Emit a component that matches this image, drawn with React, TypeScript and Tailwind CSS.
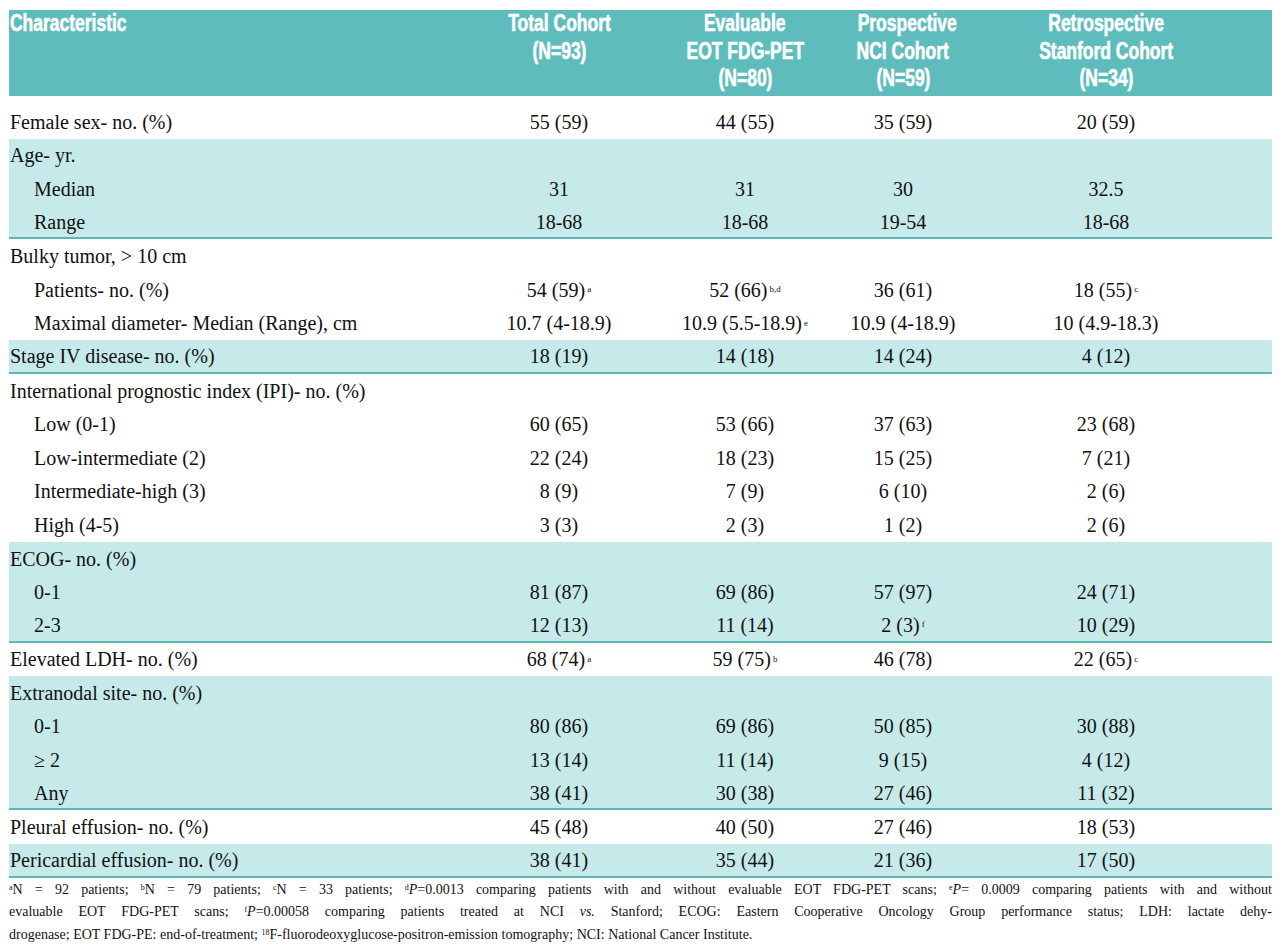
import React from "react";

type Val = string | [string, string];
type Row = { label: string; indent?: boolean; vals?: Val[] };
type Group = { shaded: boolean; rows: Row[] };

const groups: Group[] = [
  { shaded: false, rows: [{ label: "Female sex- no. (%)", vals: ["55 (59)", "44 (55)", "35 (59)", "20 (59)"] }] },
  {
    shaded: true,
    rows: [
      { label: "Age- yr." },
      { label: "Median", indent: true, vals: ["31", "31", "30", "32.5"] },
      { label: "Range", indent: true, vals: ["18-68", "18-68", "19-54", "18-68"] },
    ],
  },
  {
    shaded: false,
    rows: [
      { label: "Bulky tumor, > 10 cm" },
      { label: "Patients- no. (%)", indent: true, vals: [["54 (59)", "a"], ["52 (66)", "b,d"], "36 (61)", ["18 (55)", "c"]] },
      {
        label: "Maximal diameter- Median (Range), cm",
        indent: true,
        vals: ["10.7 (4-18.9)", ["10.9 (5.5-18.9)", "e"], "10.9 (4-18.9)", "10 (4.9-18.3)"],
      },
    ],
  },
  { shaded: true, rows: [{ label: "Stage IV disease- no. (%)", vals: ["18 (19)", "14 (18)", "14 (24)", "4 (12)"] }] },
  {
    shaded: false,
    rows: [
      { label: "International prognostic index (IPI)- no. (%)" },
      { label: "Low (0-1)", indent: true, vals: ["60 (65)", "53 (66)", "37 (63)", "23 (68)"] },
      { label: "Low-intermediate (2)", indent: true, vals: ["22 (24)", "18 (23)", "15 (25)", "7 (21)"] },
      { label: "Intermediate-high (3)", indent: true, vals: ["8 (9)", "7 (9)", "6 (10)", "2 (6)"] },
      { label: "High (4-5)", indent: true, vals: ["3 (3)", "2 (3)", "1 (2)", "2 (6)"] },
    ],
  },
  {
    shaded: true,
    rows: [
      { label: "ECOG- no. (%)" },
      { label: "0-1", indent: true, vals: ["81 (87)", "69 (86)", "57 (97)", "24 (71)"] },
      { label: "2-3", indent: true, vals: ["12 (13)", "11 (14)", ["2 (3)", "f"], "10 (29)"] },
    ],
  },
  {
    shaded: false,
    rows: [{ label: "Elevated LDH- no. (%)", vals: [["68 (74)", "a"], ["59 (75)", "b"], "46 (78)", ["22 (65)", "c"]] }],
  },
  {
    shaded: true,
    rows: [
      { label: "Extranodal site- no. (%)" },
      { label: "0-1", indent: true, vals: ["80 (86)", "69 (86)", "50 (85)", "30 (88)"] },
      { label: "≥ 2", indent: true, vals: ["13 (14)", "11 (14)", "9 (15)", "4 (12)"] },
      { label: "Any", indent: true, vals: ["38 (41)", "30 (38)", "27 (46)", "11 (32)"] },
    ],
  },
  { shaded: false, rows: [{ label: "Pleural effusion- no. (%)", vals: ["45 (48)", "40 (50)", "27 (46)", "18 (53)"] }] },
  { shaded: true, rows: [{ label: "Pericardial effusion- no. (%)", vals: ["38 (41)", "35 (44)", "21 (36)", "17 (50)"] }] },
];

const cols = "grid grid-cols-[461px_178px_194px_122px_284px_1fr]";

function Cell({ v }: { v: Val }) {
  if (typeof v === "string") return <div className="text-center">{v}</div>;
  return (
    <div className="text-center">
      {v[0]}
      <sup className="ml-[2px] text-[9px]">{v[1]}</sup>
    </div>
  );
}

// condensed heavy header text (no narrow face installed, so squeeze Liberation Sans)
function H({ children, left }: { children: React.ReactNode; left?: boolean }) {
  return (
    <span
      className={`inline-block whitespace-nowrap scale-x-[0.76] [-webkit-text-stroke:0.6px_white] ${
        left ? "origin-left" : "origin-center"
      }`}
    >
      {children}
    </span>
  );
}

export default function App() {
  return (
    <div className="h-[948px] w-[1280px] overflow-hidden bg-white pt-[10px] pl-[9px] text-[#111]">
      <div className="w-[1263px]">
        {/* header */}
        <div
          className={`${cols} h-[86px] bg-[#5ebdbc] text-[23px] font-bold leading-[27.5px] text-white`}
          style={{ fontFamily: '"Liberation Sans", Arial, sans-serif' }}
        >
          <div className="pl-[1px]">
            <H left>Characteristic</H>
          </div>
          <div className="text-center">
            <H>Total Cohort</H>
            <br />
            <H>(N=93)</H>
          </div>
          <div className="text-center">
            <H>Evaluable</H>
            <br />
            <H>EOT FDG-PET</H>
            <br />
            <H>(N=80)</H>
          </div>
          <div className="text-center">
            <H>Prospective</H>
            <br />
            <H>NCI Cohort</H>
            <br />
            <H>(N=59)</H>
          </div>
          <div className="text-center">
            <H>Retrospective</H>
            <br />
            <H>Stanford Cohort</H>
            <br />
            <H>(N=34)</H>
          </div>
          <div />
        </div>

        {/* body */}
        <div className="mt-[9px] text-[20px]" style={{ fontFamily: '"Liberation Serif", serif' }}>
          {groups.map((g, gi) => (
            <div key={gi} className={g.shaded ? "bg-[#c6eaea]" : ""}>
              {g.rows.map((r, ri) => {
                const last = g.shaded && ri === g.rows.length - 1;
                return (
                  <div
                    key={ri}
                    className={`${cols} h-[33.6px] items-center ${last ? "border-b-2 border-[#5cb7b6]" : ""}`}
                  >
                    <div className={r.indent ? "pl-[25px]" : "pl-[1px]"}>{r.label}</div>
                    {r.vals ? r.vals.map((v, vi) => <Cell key={vi} v={v} />) : null}
                  </div>
                );
              })}
            </div>
          ))}
        </div>

        {/* footnotes */}
        <div className="mt-[1px] text-[14px] leading-[22.5px]" style={{ fontFamily: '"Liberation Serif", serif' }}>
          <div className="text-justify [text-align-last:justify]">
            <sup className="text-[8px]">a</sup>N = 92 patients; <sup className="text-[8px]">b</sup>N = 79 patients;{" "}
            <sup className="text-[8px]">c</sup>N = 33 patients; <sup className="text-[8px]">d</sup>
            <i>P</i>=0.0013 comparing patients with and without evaluable EOT FDG-PET scans;{" "}
            <sup className="text-[8px]">e</sup>
            <i>P</i>= 0.0009 comparing patients with and without
          </div>
          <div className="text-justify [text-align-last:justify]">
            evaluable EOT FDG-PET scans; <sup className="text-[8px]">f</sup>
            <i>P</i>=0.00058 comparing patients treated at NCI <i>vs.</i> Stanford; ECOG: Eastern Cooperative Oncology
            Group performance status; LDH: lactate dehy-
          </div>
          <div>
            drogenase; EOT FDG-PE: end-of-treatment; <sup className="text-[8px]">18</sup>
            F-fluorodeoxyglucose-positron-emission tomography; NCI: National Cancer Institute.
          </div>
        </div>
      </div>
    </div>
  );
}
